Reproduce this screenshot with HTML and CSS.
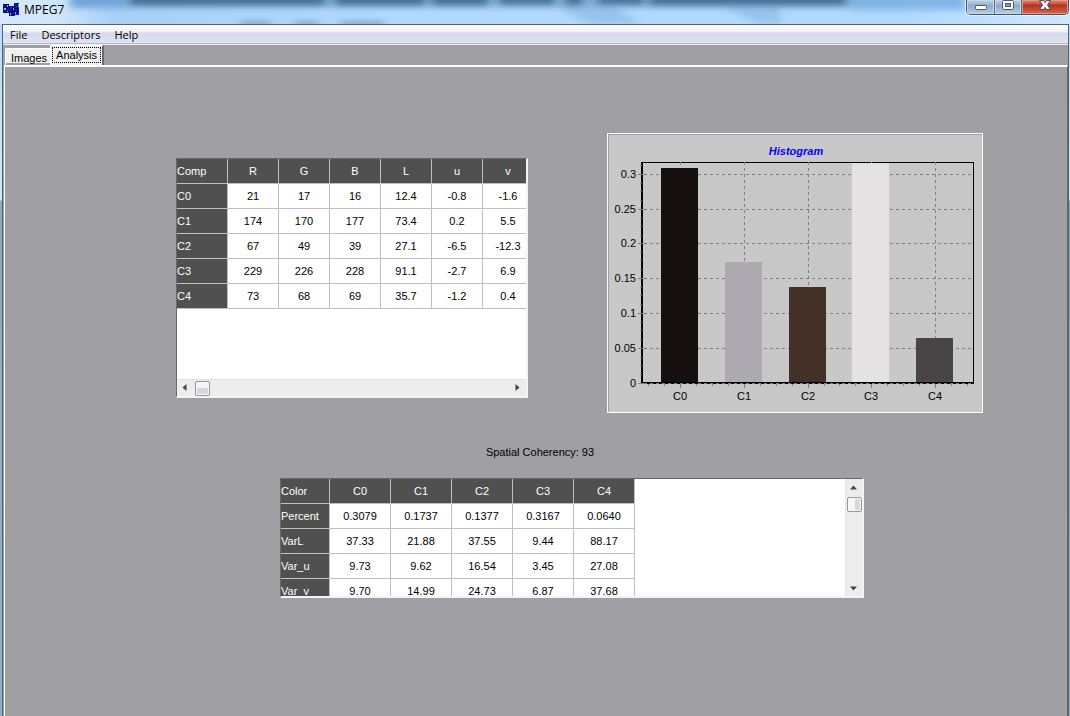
FILE: index.html
```html
<!DOCTYPE html>
<html lang="en">
<head>
<meta charset="utf-8">
<title>MPEG7</title>
<link rel="stylesheet" href="styles.css">
</head>
<body>
<div class="window">
  <header class="titlebar">
    <svg class="glass" width="1070" height="24" aria-hidden="true">
      <defs><filter id="soft" filterUnits="userSpaceOnUse" x="0" y="-20" width="1070" height="60"><feGaussianBlur stdDeviation="4 3"/></filter></defs>
      <g filter="url(#soft)" fill="#47709a">
        <path d="M555 6h60l25 18h-50zM720 6h60v18h-20z" fill="#98c3ea"/>
        <rect x="70" y="-6" width="60" height="14" fill="#6fa5d9"/>
        <rect x="120" y="-10" width="730" height="17" fill="#7ba9d3"/>
        <rect x="130" y="-6" width="195" height="12"/>
        <rect x="335" y="-6" width="90" height="12"/>
        <rect x="432" y="-6" width="56" height="12"/>
        <rect x="500" y="-6" width="54" height="11"/>
        <rect x="566" y="-6" width="16" height="12"/>
        <rect x="598" y="-6" width="46" height="11"/>
        <rect x="650" y="-6" width="196" height="12"/>
        <rect x="850" y="-6" width="115" height="16" fill="#82b5e5"/>
        <path d="M240 22h30v4h-30zM294 22h24v4h-24zM340 22h44v4h-44z" fill="#6890b5"/>
      </g>
    </svg>
    <svg class="logo" width="18" height="14" viewBox="0 0 18 14" aria-hidden="true" shape-rendering="crispEdges">
      <path d="M0 1h6v9H0zM6 3h6v10H6zM11 0h5v12h-5z" fill="#0a18d8"/>
      <path d="M0 1h6v1H0zM0 4h6v1H0zM0 7h6v1H0zM3 1h1v9H3zM0 9h6v1H0zM6 3h1v10H6zM9 3h1v10H9zM11 1h1v11h-1zM14 0h1v11h-1zM12 5h4v1h-4zM12 8h4v1h-4zM7 8h4v1H7z" fill="#000048"/>
      <path d="M4 2h1v2H4zM1 5h2v2H1zM10 5h1v2h-1zM15 1h1v3h-1zM12 9h1v2h-1zM4 8h1v1H4zM7 10h1v2H7z" fill="#5cc4e8"/>
    </svg>
    <h1 class="title">MPEG7</h1>
    <div class="controls">
      <button class="ctl ctl-min" aria-label="Minimize"><svg width="12" height="11"><rect x=".5" y="4.500" width="11" height="4" rx="1" fill="#fff" stroke="#4b5669"/></svg></button>
      <button class="ctl ctl-max" aria-label="Maximize"><svg width="12" height="11"><rect x=".5" y="-.5" width="11" height="9" rx="1" fill="#fff" stroke="#4b5669"/><rect x="3.500" y="2.500" width="5" height="3" fill="#82a2c2" stroke="#4b5669"/></svg></button>
      <button class="ctl ctl-close" aria-label="Close"><svg width="12" height="11"><path d="M.5-.5h4L6 1.500 7.500-.5h4L8.500 4l3 4.500h-4L6 6.500 4.500 8.500h-4L3.500 4z" fill="#fff" stroke="#5b4350"/></svg></button>
    </div>
  </header>

  <div class="client">
    <nav class="menubar">
      <button class="menu">File</button>
      <button class="menu">Descriptors</button>
      <button class="menu">Help</button>
    </nav>
    <div class="tabs" role="tablist">
      <button class="tab" role="tab" aria-selected="false">Images</button>
      <button class="tab active" role="tab" aria-selected="true"><span class="focus">Analysis</span></button>
    </div>
    <main class="panel" role="tabpanel">
      <div class="top-row">
        <section class="sunken components">
          <div class="viewport">
            <table class="grid">
              <thead><tr><th>Comp</th><th>R</th><th>G</th><th>B</th><th>L</th><th>u</th><th>v</th></tr></thead>
              <tbody>
                <tr><th>C0</th><td>21</td><td>17</td><td>16</td><td>12.4</td><td>-0.8</td><td>-1.6</td></tr>
                <tr><th>C1</th><td>174</td><td>170</td><td>177</td><td>73.4</td><td>0.2</td><td>5.5</td></tr>
                <tr><th>C2</th><td>67</td><td>49</td><td>39</td><td>27.1</td><td>-6.5</td><td>-12.3</td></tr>
                <tr><th>C3</th><td>229</td><td>226</td><td>228</td><td>91.1</td><td>-2.7</td><td>6.9</td></tr>
                <tr><th>C4</th><td>73</td><td>68</td><td>69</td><td>35.7</td><td>-1.2</td><td>0.4</td></tr>
              </tbody>
            </table>
          </div>
          <div class="scroll horizontal">
            <button class="arrow" aria-label="Scroll left"><svg width="5" height="8"><path d="M4.500 0v7L.5 3.500z" fill="#444"/></svg></button>
            <span class="thumb"></span>
            <button class="arrow end" aria-label="Scroll right"><svg width="5" height="8"><path d="M.5 0v7l4-3.500z" fill="#444"/></svg></button>
          </div>
        </section>

        <figure class="chart">
          <svg viewBox="0 0 376 280" role="img" aria-label="Histogram">
            <g shape-rendering="crispEdges">
              <rect width="376" height="280" fill="#fff"/>
              <rect x="1" y="1" width="374" height="278" fill="#a0a0a0"/>
              <rect x="2" y="2" width="373" height="277" fill="#c8c8c8"/>
              <path d="M34 29.500h333M366.500 29v221" stroke="#000" fill="none"/>
              <path d="M34 29h2v222h-2zM34 249h333v2H34z"/>
              <path d="M37 41.500h329M37 76.500h329M37 110.500h329M37 145.500h329M37 180.500h329M37 215.500h329M37 250.500h329M73.500 29v220M137.500 29v220M201.500 29v220M328.500 29v220" stroke="#808080" stroke-dasharray="3 3" fill="none"/>
              <path d="M31 41.500h7M31 76.500h7M31 110.500h7M31 145.500h7M31 180.500h7M31 215.500h7M31 250.500h7M73.500 251v4M137.500 251v4M201.500 251v4M264.500 251v4M328.500 251v4M73.500 29v3M137.500 29v3M201.500 29v3M264.500 29v1M328.500 29v3" stroke="#808080"/>
              <path d="M33 32.500h2M33 50.500h2M33 58.500h2M33 67.500h2M33 85.500h2M33 93.500h2M33 102.500h2M33 119.500h2M33 127.500h2M33 136.500h2M33 154.500h2M33 162.500h2M33 171.500h2M33 189.500h2M33 197.500h2M33 206.500h2M33 224.500h2M33 232.500h2M33 241.500h2" stroke="#808080"/>
              <path d="M41.500 251v2M57.500 251v2M89.500 251v2M105.500 251v2M121.500 251v2M153.500 251v2M169.500 251v2M185.500 251v2M217.500 251v2M232.500 251v2M248.500 251v2M280.500 251v2M296.500 251v2M312.500 251v2M344.500 251v2M360.500 251v2" stroke="#808080"/>
              <rect x="54" y="35" width="37" height="214" fill="#161110"/>
              <rect x="118" y="129" width="37" height="120" fill="#aeaab1"/>
              <rect x="182" y="154" width="37" height="95" fill="#433127"/>
              <rect x="245" y="30" width="37" height="219" fill="#e5e2e4"/>
              <rect x="309" y="205" width="37" height="44" fill="#494445"/>
            </g>
            <text class="chart-title" x="189" y="22">Histogram</text>
            <g class="y-labels">
              <text x="29" y="45">0.3</text><text x="29" y="80">0.25</text><text x="29" y="114">0.2</text><text x="29" y="149">0.15</text><text x="29" y="184">0.1</text><text x="29" y="219">0.05</text><text x="29" y="254">0</text>
            </g>
            <g class="x-labels">
              <text x="73" y="267">C0</text><text x="137" y="267">C1</text><text x="201" y="267">C2</text><text x="264" y="267">C3</text><text x="328" y="267">C4</text>
            </g>
          </svg>
        </figure>
      </div>

      <p class="coherency">Spatial Coherency: 93</p>

      <div class="bottom-row">
        <section class="sunken stats">
          <div class="viewport">
            <table class="grid">
              <thead><tr><th>Color</th><th>C0</th><th>C1</th><th>C2</th><th>C3</th><th>C4</th></tr></thead>
              <tbody>
                <tr><th>Percent</th><td>0.3079</td><td>0.1737</td><td>0.1377</td><td>0.3167</td><td>0.0640</td></tr>
                <tr><th>VarL</th><td>37.33</td><td>21.88</td><td>37.55</td><td>9.44</td><td>88.17</td></tr>
                <tr><th>Var_u</th><td>9.73</td><td>9.62</td><td>16.54</td><td>3.45</td><td>27.08</td></tr>
                <tr><th>Var_v</th><td>9.70</td><td>14.99</td><td>24.73</td><td>6.87</td><td>37.68</td></tr>
              </tbody>
            </table>
          </div>
          <div class="scroll vertical">
            <button class="arrow" aria-label="Scroll up"><svg width="8" height="5"><path d="M0 4.500h7L3.500.5z" fill="#444"/></svg></button>
            <span class="thumb"></span>
            <button class="arrow end" aria-label="Scroll down"><svg width="8" height="5"><path d="M0 .5h7l-3.500 4z" fill="#444"/></svg></button>
          </div>
        </section>
      </div>
    </main>
  </div>
</div>
</body>
</html>
```
FILE: styles.css
```css
* { box-sizing: border-box; }

body {
  margin: 0;
  font: 11px/14px "Liberation Sans", Arial, sans-serif;
  color: #000;
  background: #a09fa4;
}

button {
  margin: 0;
  padding: 0;
  border: 0;
  background: none;
  font: inherit;
  color: inherit;
}

.window {
  display: flex;
  flex-direction: column;
  min-height: 100vh;
  padding: 0 1px 0 2px;
  background: linear-gradient(#b6dafb 0, #cfe7fd 200px, #8fa9c4 201px, #8fb0cf 100%);
}

/* Title bar */
.titlebar {
  position: relative;
  display: flex;
  align-items: flex-start;
  height: 24px;
  margin: 0 -1px 0 -2px;
  padding-left: 3px;
  overflow: hidden;
  background: linear-gradient(90deg, #d5e9fb 0, #cfe5fa 60px, #a9d1f7 110px, #b1d9fd 400px, #b1d9fd 900px, #cfe7ff 100%);
}

.glass {
  position: absolute;
  top: 0;
  left: 0;
  width: 100%;
}

.logo {
  position: relative;
  margin-top: 3px;
}

.title {
  position: relative;
  margin: 1px 0 0 3px;
  font: 12px/18px "Open Sans", "Noto Sans", sans-serif;
}

.controls {
  position: relative;
  display: flex;
  height: 15px;
  margin-left: auto;
  margin-right: 1px;
  border: 1px solid #46525f;
  border-top: 0;
  border-radius: 0 0 5px 5px;
  box-shadow: 0 0 0 1px #e2f1ff;
  overflow: hidden;
}

.ctl {
  display: flex;
  justify-content: center;
  width: 27px;
  padding-top: 1px;
  background: linear-gradient(#b9cde2 0, #a4bcd6 4px, #8ba8c6 5px, #b5cfe8 100%);
  box-shadow: inset 0 0 0 1px #c8dbee;
}

.ctl svg { overflow: visible; }

.ctl + .ctl { border-left: 1px solid #5a6b7d; }

.ctl-close {
  width: 47px;
  background: linear-gradient(#d58a7c 0, #c8553f 4px, #b5301c 5px, #d8674d 100%);
  box-shadow: inset 0 0 0 1px #e19a8b;
}

/* Client area */
.client {
  display: flex;
  flex: 1;
  flex-direction: column;
  border: solid #55606e;
  border-width: 1px 1px 0;
  background: #a09fa4;
}

.menubar {
  display: flex;
  gap: 14px;
  height: 20px;
  padding-left: 7px;
  border-bottom: 1px solid #f0f0f0;
  box-shadow: inset 0 -1px #b4b9c8;
  background: linear-gradient(#fff 0, #ecf0f6 7px, #d5daeb 8px, #dfe5f4 100%);
}

.menu { font: 11px/20px "Open Sans", "Noto Sans", sans-serif; }

.tabs {
  display: flex;
  align-items: flex-end;
  height: 20px;
  padding-left: 2px;
}

.tab {
  height: 17px;
  padding: 1px 3px 0 5px;
  border: solid #fff;
  border-width: 1px 0 0 1px;
  border-radius: 2px 0 0 0;
  background: #f0f0f0;
  box-shadow: inset 0 -2px #a09fa4;
}

.tab.active {
  height: 20px;
  padding: 1px 1px 2px;
  border-right: 2px solid #696969;
  box-shadow: none;
}

.focus {
  display: block;
  padding: 0 3px;
  border: 1px dotted #000;
}

.panel {
  flex: 1;
  margin-left: 1px;
  border: 2px solid #fff;
  border-width: 2px 1px 0;
  border-right-color: #696969;
  border-bottom: 0;
  padding: 66px 0 40px;
}

.top-row {
  display: grid;
  grid-template-columns: 170fr 353fr 79fr 376fr 84fr;
}

.bottom-row {
  display: grid;
  grid-template-columns: 274fr 585fr 203fr;
}

/* Data grids */
.sunken {
  display: flex;
  grid-column: 2;
  min-width: 0;
  border: 2px solid;
  border-color: #696969 #f4f4f4 #f4f4f4 #696969;
  border-width: 1px 2px 2px 1px;
  background: #fff;
}

.components {
  flex-direction: column;
  height: 240px;
  margin: 25px 0 0 1px;
}

.stats {
  height: 120px;
  margin-left: 1px;
}

.viewport {
  flex: 1;
  min-width: 0;
  min-height: 0;
  overflow: hidden;
}

.grid {
  table-layout: fixed;
  border-collapse: separate;
  border-spacing: 0;
}

.components .grid { width: 357px; }
.stats .grid { width: 354px; }
.stats .grid th:first-child { width: 49px; }

.grid th,
.grid td {
  height: 25px;
  padding: 0;
  border: solid #c0c0c0;
  border-width: 0 1px 1px 0;
  text-align: center;
}

.grid th {
  background: #505050;
  color: #fff;
  font-weight: normal;
}

.grid th:first-child { text-align: left; }

/* Scroll bars */
.scroll {
  display: flex;
  align-items: center;
  background: #ededed;
}

.horizontal {
  height: 17px;
  padding: 0 6px 0 5px;
  border-top: 1px solid #e0e0e0;
}

.vertical {
  flex-direction: column;
  width: 17px;
  padding: 6px 0 5px;
  border-left: 1px solid #e4e4e4;
}

.arrow { display: flex; }
.end { margin-left: auto; }
.vertical .end { margin: auto 0 0; }

.thumb {
  width: 15px;
  height: 15px;
  border: 1px solid #979797;
  border-radius: 2px;
  background: linear-gradient(#f5f5f5 50%, #d4d4d8 50%, #dcdce0);
  box-shadow: inset 0 0 0 1px #f8f8f8;
}

.horizontal .thumb { margin-left: 8px; }

.vertical .thumb {
  margin-top: 7px;
  background: linear-gradient(90deg, #f5f5f5 50%, #d4d4d8 50%, #dcdce0);
}

/* Histogram */
.chart {
  grid-column: 4;
  margin: 0;
}

.chart svg {
  display: block;
  width: 100%;
  font-size: 11px;
}

.chart-title {
  fill: #00f;
  font-weight: bold;
  font-style: italic;
  text-anchor: middle;
}

.y-labels { text-anchor: end; }
.x-labels { text-anchor: middle; }

.coherency {
  margin: 32px 0 19px;
  padding-left: 8px;
  text-align: center;
}
```
